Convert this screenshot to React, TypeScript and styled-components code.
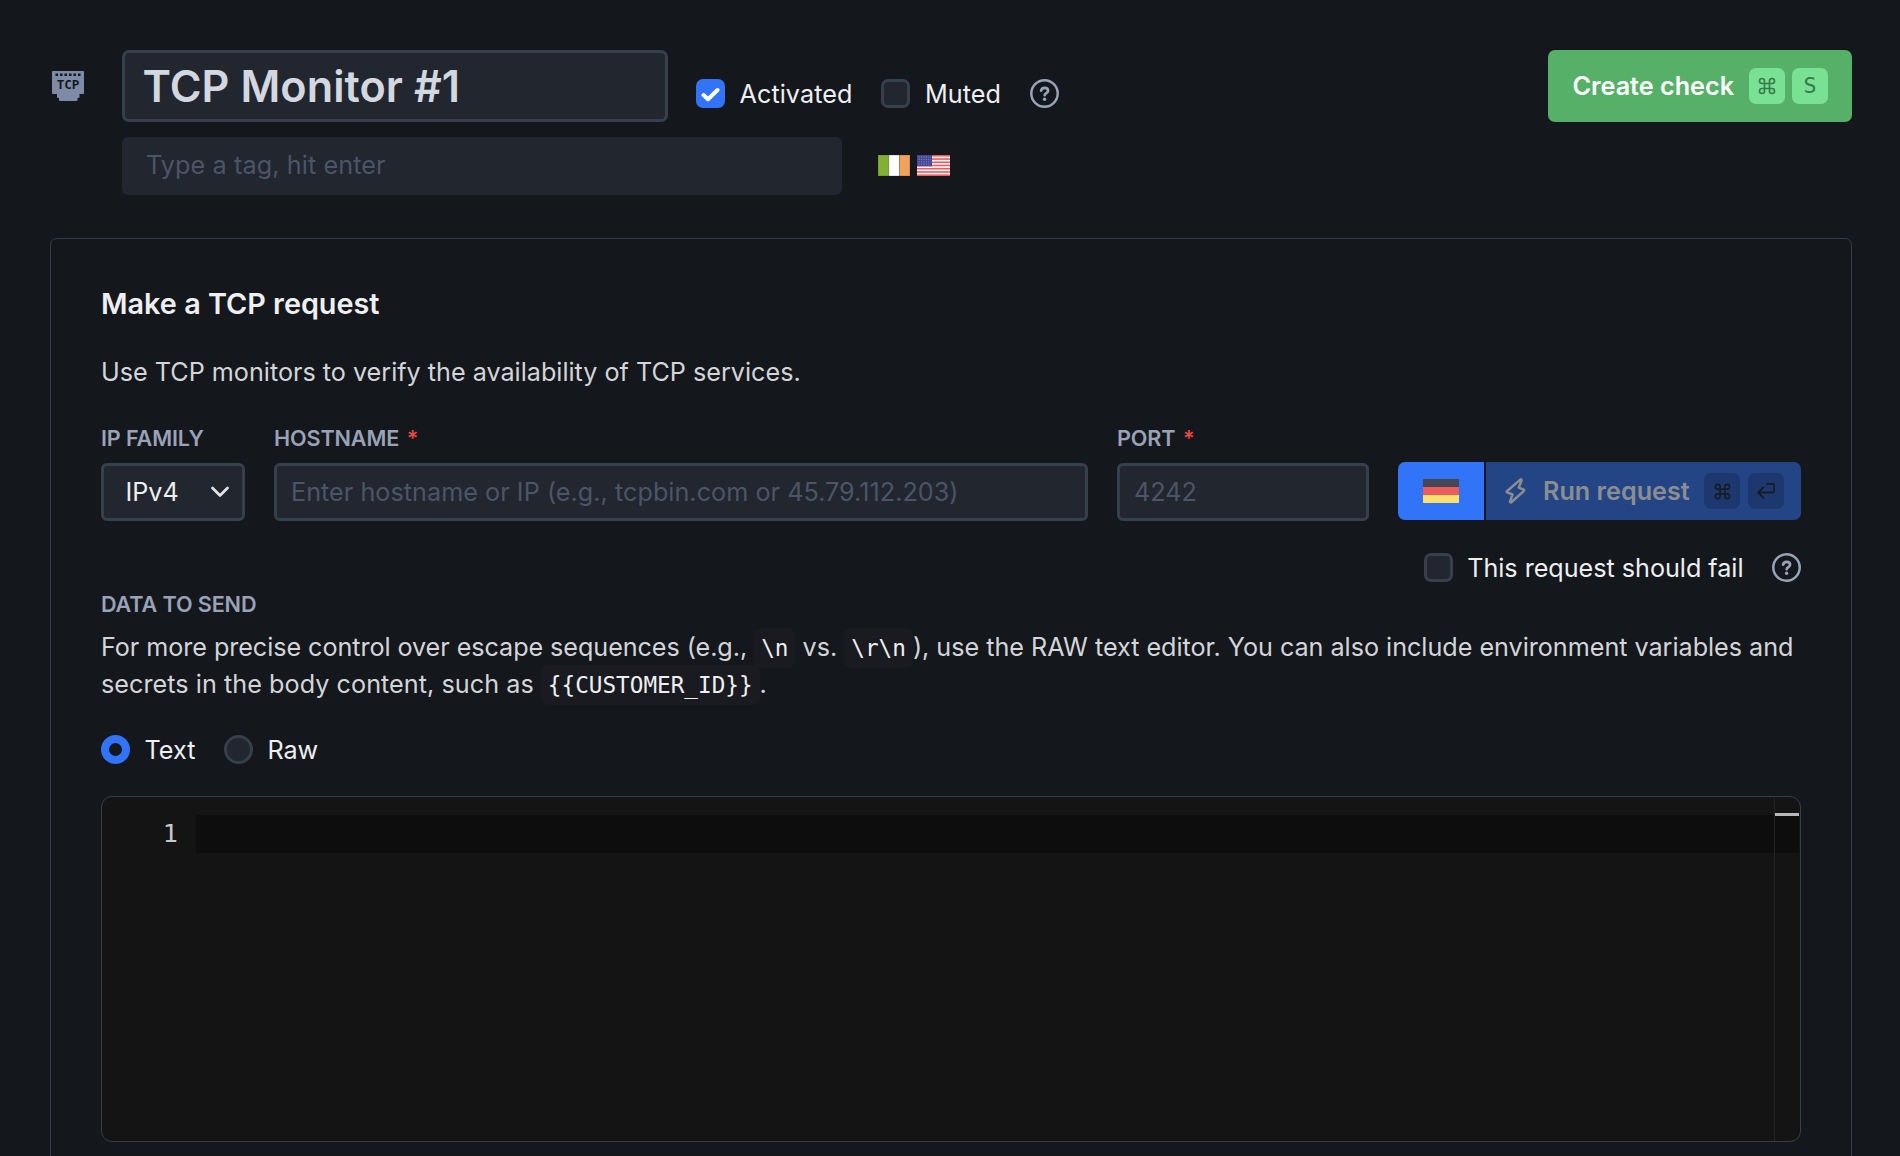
import React from "react";
import styled, { createGlobalStyle, css } from "styled-components";
import { Command } from "lucide-react";

const color = {
  page: "#14171c",
  field: "#22262f",
  border: "#373f4c",
  text: "#eeeff1",
  body: "#d3d5d9",
  label: "#99a2b7",
  placeholder: "#4b5567",
  blue: "#3174f8",
  red: "#ea483f",
  editor: "#141414",
};

const GlobalStyle = createGlobalStyle`
  *, *::before, *::after { box-sizing: border-box; }
  body {
    margin: 0;
    background: ${color.page};
    color: ${color.text};
    font-family: Inter, "Liberation Sans", sans-serif;
    font-size: 25.2px;
    line-height: 36px;
    overflow: hidden;
  }
  svg { display: block; flex: none; }
`;

const Page = styled.div`
  height: 100vh;
  overflow: hidden;
  padding: 50px 48px 0 50px;
`;

const Header = styled.header`
  display: flex;
  align-items: flex-start;
  height: 188px;
`;

const TypeIcon = styled.div`
  width: 72px;
  padding: 21px 0 0 2px;
`;

const HeaderMain = styled.div`
  flex: 1;
  display: flex;
  flex-direction: column;
  gap: 15px;
`;

const HeaderRow = styled.div`
  display: flex;
  align-items: center;
`;

const TitleField = styled.div`
  width: 546px;
  height: 72px;
  padding-left: 17.5px;
  border: 3px solid ${color.border};
  border-radius: 7px;
  background: ${color.field};
  color: #d3d7e0;
  font-size: 43.2px;
  font-weight: 600;
  letter-spacing: 0.06px;
  line-height: 66px;
  white-space: nowrap;
`;

const Toggles = styled.div`
  display: flex;
  align-items: center;
  gap: 29px;
  margin-left: 28px;
  padding-top: 15px;
`;

const TagField = styled.div`
  width: 720px;
  height: 58px;
  padding-left: 24px;
  border-radius: 6px;
  background: ${color.field};
  color: ${color.placeholder};
  line-height: 56px;
  letter-spacing: 0.1px;
`;

const Flags = styled.div`
  display: flex;
  gap: 7px;
  margin-left: 36px;
  padding-bottom: 2px;
`;

const Option = styled.div<{ $gap?: number }>`
  display: flex;
  align-items: center;
  gap: ${(p) => p.$gap ?? 14.5}px;
  height: 29px;
  white-space: nowrap;
`;

const ToggleLabel = styled.span`
  letter-spacing: 0.06px;
`;

const Checkbox = styled.span<{ $checked?: boolean }>`
  display: grid;
  place-items: center;
  width: 29px;
  height: 29px;
  border: 3px solid ${(p) => (p.$checked ? color.blue : color.border)};
  border-radius: 7px;
  background: ${(p) => (p.$checked ? color.blue : color.field)};
`;

const Radio = styled.span<{ $checked?: boolean }>`
  width: 29px;
  height: 29px;
  border-radius: 50%;
  ${(p) =>
    p.$checked
      ? css`
          border: 8.5px solid ${color.blue};
          background: ${color.page};
        `
      : css`
          border: 3px solid ${color.border};
          background: ${color.field};
        `}
`;

const CreateButton = styled.button`
  display: flex;
  align-items: center;
  width: 304px;
  height: 72px;
  padding: 0 24px 0 24.5px;
  border: 0;
  border-radius: 7px;
  background: #56b068;
  color: #fff;
  font: 600 25.2px/36px Inter, sans-serif;
  white-space: nowrap;
`;

const Keys = styled.span<{ $gap: number }>`
  display: flex;
  gap: ${(p) => p.$gap}px;
  margin-left: auto;
`;

const Key = styled.kbd<{ $muted?: boolean }>`
  display: grid;
  place-items: center;
  width: 36px;
  height: 36px;
  border-radius: 7px;
  background: ${(p) => (p.$muted ? "#1d386f" : "#78e194")};
  color: ${(p) => (p.$muted ? "#171b23" : "#397a4a")};
  font: 400 21.6px/34px "DejaVu Sans Mono", monospace;
`;

const Panel = styled.main`
  display: flex;
  flex-direction: column;
  height: 1000px;
  padding: 47px 50px 0;
  border: 1px solid #363b48;
  border-radius: 7px;
`;

const Heading = styled.h2`
  margin: 0;
  font-size: 28.8px;
  font-weight: 600;
  line-height: 36px;
`;

const Intro = styled.p`
  margin: 32px 0 0;
  color: ${color.body};
  letter-spacing: -0.01px;
`;

const FormRow = styled.div`
  display: grid;
  grid-template-columns: 144px 1fr 252px 403px;
  column-gap: 29px;
  align-items: end;
  margin-top: 35px;
`;

const Label = styled.div`
  color: ${color.label};
  font-size: 21.6px;
  font-weight: 600;
  letter-spacing: -0.12px;
  line-height: 26px;
  white-space: nowrap;
`;

const Required = styled.span`
  margin-left: 7.5px;
  color: ${color.red};
`;

const Field = styled.div`
  display: flex;
  align-items: center;
  height: 58px;
  margin-top: 12px;
  padding: 0 14px;
  border: 3px solid ${color.border};
  border-radius: 6px;
  background: ${color.field};
  color: ${color.placeholder};
  white-space: nowrap;
`;

const SelectField = styled(Field)`
  justify-content: space-between;
  padding: 0 13px 0 21.5px;
  color: ${color.text};
`;

const HostPlaceholder = styled.span`
  letter-spacing: 0.03px;
`;

const RunGroup = styled.div`
  display: flex;
  gap: 2px;
  height: 58px;
  margin-bottom: 1px;
`;

const LocationButton = styled.button`
  display: grid;
  place-items: center;
  flex: none;
  width: 86px;
  padding: 0;
  border: 0;
  border-radius: 7px 0 0 7px;
  background: ${color.blue};
`;

const RunButton = styled.button`
  flex: 1;
  min-width: 0;
  display: flex;
  align-items: center;
  gap: 17px;
  padding: 0 17px 0 19px;
  border: 0;
  border-radius: 0 7px 7px 0;
  background: #234485;
  color: #8b8e91;
  font: 600 25.2px/36px Inter, sans-serif;
  white-space: nowrap;

  ${Keys} {
    margin-left: -2.5px;
  }
`;

const FailRow = styled.div`
  display: flex;
  justify-content: flex-end;
  align-items: center;
  gap: 28.5px;
  height: 29px;
  margin: 32px 0 9px;
`;

const FailLabel = styled.span`
  letter-spacing: -0.03px;
`;

const Description = styled.p`
  margin: 11.5px 0 0;
  color: ${color.body};
  line-height: 37px;
`;

const Run = styled.span<{ $spacing: number }>`
  letter-spacing: ${(p) => p.$spacing}px;
`;

const Code = styled.code`
  padding: 7px;
  border-radius: 7px;
  background: #191b20;
  color: ${color.text};
  font: 22.68px "DejaVu Sans Mono", monospace;
`;

const ModeRow = styled.div`
  display: flex;
  gap: 29px;
  margin: 32.5px 0 32px;
`;

const Editor = styled.div`
  display: flex;
  height: 346px;
  padding-right: 1px;
  border: 1px solid #363d4b;
  border-radius: 11px;
  background: ${color.editor};
  overflow: hidden;
`;

const Gutter = styled.div`
  width: 94px;
  padding: 18px 18px 0 0;
  color: #c9c9c9;
  font: 25.2px/38px "DejaVu Sans Mono", monospace;
  text-align: right;
`;

const Lines = styled.div`
  flex: 1;
  padding-top: 18px;
`;

const ActiveLine = styled.div`
  height: 38px;
  background: #0d0d0d;
`;

const Ruler = styled.div`
  width: 25px;
  padding-top: 16px;
  border-left: 1px solid #232323;
`;

const RulerMark = styled.div`
  height: 40px;
  border-top: 3px solid #b9b9b9;
  background: #0d0d0d;
`;

const TcpIcon = () => (
  <svg width="32" height="30" viewBox="0 0 32 30">
    <path d="M1 0H31a1 1 0 0 1 1 1V22a1 1 0 0 1-1 1H27.5V26a1 1 0 0 1-1 1H25.500V29a1 1 0 0 1-1 1H8a1 1 0 0 1-1-1V27H6a1 1 0 0 1-1-1V23H1a1 1 0 0 1-1-1V1a1 1 0 0 1 1-1z" fill="#7f8ba6" />
    <path d="M3.500 3.700H28.500" stroke={color.page} strokeWidth="2.600" strokeDasharray="2.600 1.880" />
    <text x="16" y="18.300" textAnchor="middle" fontFamily="DejaVu Sans Mono, monospace" fontWeight="700" fontSize="12.600" fill={color.page}>
      TCP
    </text>
  </svg>
);

const CheckIcon = () => (
  <svg width="19" height="16" viewBox="0 0 19 16">
    <path d="M2.500 9L7 13.200L16.500 4" fill="none" stroke="#fff" strokeWidth="4" strokeLinecap="round" strokeLinejoin="round" />
  </svg>
);

const HelpIcon = () => (
  <svg width="29" height="29" viewBox="0 0 29 29" fill="none" stroke={color.label}>
    <circle cx="14.500" cy="14.500" r="13.200" strokeWidth="2.500" />
    <path d="M11.100 11.600C11.500 9.700 12.800 8.800 14.600 8.800c2 0 3.500 1.100 3.500 2.900 0 2.300-3.400 2.400-3.400 4.500" strokeWidth="2.700" strokeLinecap="round" />
    <circle cx="14.600" cy="20.300" r="1.700" fill={color.label} stroke="none" />
  </svg>
);

const IrelandFlag = () => (
  <svg width="32" height="21">
    <rect width="11" height="21" fill="#82b036" />
    <rect x="11" width="10.500" height="21" fill="#fff" />
    <rect x="21.500" width="10.500" height="21" fill="#f1a25b" />
    <path d="M11 0V21M21.500 0V21" stroke="#000" strokeOpacity="0.16" />
    <rect x="0.500" y="0.500" width="31" height="20" fill="none" stroke="#000" strokeOpacity="0.1" />
  </svg>
);

const UsFlag = () => (
  <svg width="33" height="21" viewBox="0 0 33 21">
    <rect width="33" height="21" fill="#fff" />
    {Array.from({ length: 7 }, (_, i) => (
      <rect key={i} y={(i * 42) / 13} width="33" height={21 / 13} fill="#f0595e" />
    ))}
    <rect width="15" height="11.300" fill="#464695" />
    {[2, 4.4, 6.8, 9.2].map((y) => (
      <path key={y} d={`M1.500 ${y}H14`} stroke="#8686bd" strokeWidth="1" strokeDasharray="1.200 1.200" />
    ))}
  </svg>
);

const GermanFlag = () => (
  <svg width="36" height="24">
    <rect width="36" height="8" fill="#464655" />
    <rect y="8" width="36" height="8" fill="#ed5b5c" />
    <rect y="16" width="36" height="8" fill="#fae16f" />
  </svg>
);

const Chevron = () => (
  <svg width="18" height="12" viewBox="0 0 18 12">
    <path d="M1.500 2L9 9.500L16.500 2" fill="none" stroke="#e4e6ea" strokeWidth="2.600" strokeLinecap="round" strokeLinejoin="round" />
  </svg>
);

const Bolt = () => (
  <svg width="21" height="26" viewBox="0 0 21 26" fill="none" stroke="#8b8e91" strokeWidth="2.500" strokeLinejoin="round">
    <path d="M15.300 1.600L1.900 13.200a.7.7 0 0 0 .2 1.100L7.500 16.500L5.100 23.300c-.3 1 .5 1.500 1.200.9L19 12.900a.8.800 0 0 0-.2-1.300L13.700 9.700L16.500 2.500c.3-.9-.5-1.500-1.200-.9z" />
  </svg>
);

const Enter = () => (
  <svg width="18" height="16" viewBox="0 0 18 16" fill="none" stroke="currentColor" strokeWidth="1.800" strokeLinecap="round" strokeLinejoin="round">
    <path d="M10 1H15.500a1.500 1.500 0 0 1 1.500 1.500V8a1.500 1.500 0 0 1-1.500 1.500H1M6.300 4.500L1 9.500L6.300 14.700" />
  </svg>
);

export default function App() {
  return (
    <>
      <GlobalStyle />
      <Page>
        <Header>
          <TypeIcon>
            <TcpIcon />
          </TypeIcon>
          <HeaderMain>
            <HeaderRow>
              <TitleField>TCP Monitor #1</TitleField>
              <Toggles>
                <Option>
                  <Checkbox $checked>
                    <CheckIcon />
                  </Checkbox>
                  <ToggleLabel>Activated</ToggleLabel>
                </Option>
                <Option>
                  <Checkbox />
                  <ToggleLabel>Muted</ToggleLabel>
                </Option>
                <HelpIcon />
              </Toggles>
            </HeaderRow>
            <HeaderRow>
              <TagField>Type a tag, hit enter</TagField>
              <Flags>
                <IrelandFlag />
                <UsFlag />
              </Flags>
            </HeaderRow>
          </HeaderMain>
          <CreateButton>
            Create check
            <Keys $gap={7}>
              <Key>
                <Command size={20} strokeWidth={2} />
              </Key>
              <Key>S</Key>
            </Keys>
          </CreateButton>
        </Header>

        <Panel>
          <Heading>Make a TCP request</Heading>
          <Intro>Use TCP monitors to verify the availability of TCP services.</Intro>

          <FormRow>
            <div>
              <Label>IP FAMILY</Label>
              <SelectField>
                IPv4
                <Chevron />
              </SelectField>
            </div>
            <div>
              <Label>
                HOSTNAME<Required>*</Required>
              </Label>
              <Field>
                <HostPlaceholder>Enter hostname or IP (e.g., tcpbin.com or 45.79.112.203)</HostPlaceholder>
              </Field>
            </div>
            <div>
              <Label>
                PORT<Required>*</Required>
              </Label>
              <Field>4242</Field>
            </div>
            <RunGroup>
              <LocationButton>
                <GermanFlag />
              </LocationButton>
              <RunButton>
                <Bolt />
                Run request
                <Keys $gap={8}>
                  <Key $muted>
                    <Command size={19} strokeWidth={2} />
                  </Key>
                  <Key $muted>
                    <Enter />
                  </Key>
                </Keys>
              </RunButton>
            </RunGroup>
          </FormRow>

          <FailRow>
            <Option>
              <Checkbox />
              <FailLabel>This request should fail</FailLabel>
            </Option>
            <HelpIcon />
          </FailRow>

          <Label>DATA TO SEND</Label>
          <Description>
            <Run $spacing={-0.07}>For more precise control over escape sequences (e.g., </Run>
            <Code>\n</Code> vs. <Code>\r\n</Code>
            <Run $spacing={-0.03}>
              ), use the RAW text editor. You can also include environment variables and{" "}
            </Run>
            <Run $spacing={0.04}>secrets in the body content, such as </Run>
            <Code>{"{{CUSTOMER_ID}}"}</Code>.
          </Description>

          <ModeRow>
            <Option>
              <Radio $checked />
              Text
            </Option>
            <Option $gap={14}>
              <Radio />
              Raw
            </Option>
          </ModeRow>

          <Editor>
            <Gutter>1</Gutter>
            <Lines>
              <ActiveLine />
            </Lines>
            <Ruler>
              <RulerMark />
            </Ruler>
          </Editor>
        </Panel>
      </Page>
    </>
  );
}
